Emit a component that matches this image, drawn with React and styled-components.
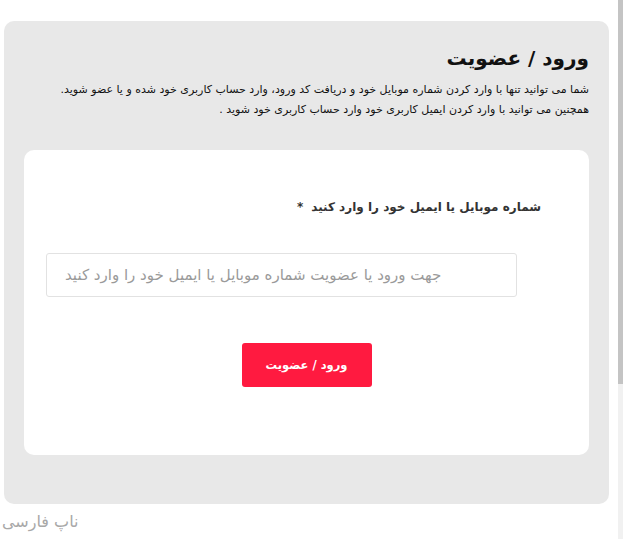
import React from "react"
import styled, { createGlobalStyle } from "styled-components"

const GlobalStyle = createGlobalStyle`
  html, body {
    margin: 0;
    padding: 0;
    background: #fff;
    overflow: hidden;
  }
  body {
    font-family: "DejaVu Sans", "Noto Sans", sans-serif;
  }
`

const Page = styled.div`
  display: flex;
  height: 539px;
  width: 623px;
`

const Main = styled.main`
  flex: 1;
  display: flex;
  flex-direction: column;
  padding: 21px 9px 0 4px;
`

const Panel = styled.section`
  direction: rtl;
  background: #e8e8e8;
  border-radius: 10px;
  padding: 22px 20px 49px;
  display: flex;
  flex-direction: column;
`

const Title = styled.h1`
  margin: 0;
  font-size: 20px;
  line-height: 30px;
  font-weight: 700;
  color: #111;
`

const Intro = styled.p`
  margin: 7px 0 30px;
  font-size: 11px;
  line-height: 20px;
  color: #111;
`

const Card = styled.div`
  background: #fff;
  border-radius: 10px;
  padding: 47px 22px 68px;
  display: flex;
  flex-direction: column;
`

const Label = styled.label`
  padding-right: 26px;
  font-size: 12px;
  line-height: 20px;
  font-weight: 700;
  color: #333;

  span {
    margin-right: 8px;
  }
`

const Input = styled.input`
  align-self: flex-end;
  direction: ltr;
  box-sizing: border-box;
  width: 471px;
  height: 44px;
  margin-top: 36px;
  padding: 0 18px;
  border: 1px solid #e2e2e2;
  border-radius: 3px;
  font-family: inherit;
  font-size: 15px;
  color: #333;
  outline: none;

  &::placeholder {
    color: #9a9a9a;
  }
`

const Button = styled.button`
  align-self: center;
  width: 130px;
  height: 44px;
  margin-top: 46px;
  border: none;
  border-radius: 3px;
  background: #ff1a40;
  color: #fff;
  font-family: inherit;
  font-size: 11.5px;
  font-weight: 700;
`

const Footer = styled.div`
  margin: 7px 0 0 -2px;
  font-size: 16px;
  line-height: 22px;
  color: #a8a8a8;
`

const ScrollTrack = styled.div`
  width: 5px;
  display: flex;
  flex-direction: column;
  background: #f1f1f1;
`

const ScrollThumb = styled.div`
  height: ${(p) => p.$size}px;
  background: #c4c4c4;
`

const App = () => {
  return (
    <Page>
      <GlobalStyle />
      <Main>
        <Panel>
          <Title>ورود / عضویت</Title>
          <Intro>
            شما می توانید تنها با وارد کردن شماره موبایل خود و دریافت کد ورود، وارد حساب کاربری خود شده و یا عضو شوید.
            <br />
            همچنین می توانید با وارد کردن ایمیل کاربری خود وارد حساب کاربری خود شوید .
          </Intro>
          <Card>
            <Label>
              شماره موبایل یا ایمیل خود را وارد کنید
              <span>*</span>
            </Label>
            <Input placeholder="جهت ورود یا عضویت شماره موبایل یا ایمیل خود را وارد کنید" />
            <Button>ورود / عضویت</Button>
          </Card>
        </Panel>
        <Footer>ناپ فارسی</Footer>
      </Main>
      <ScrollTrack>
        <ScrollThumb $size={384} />
      </ScrollTrack>
    </Page>
  )
}

export default App
